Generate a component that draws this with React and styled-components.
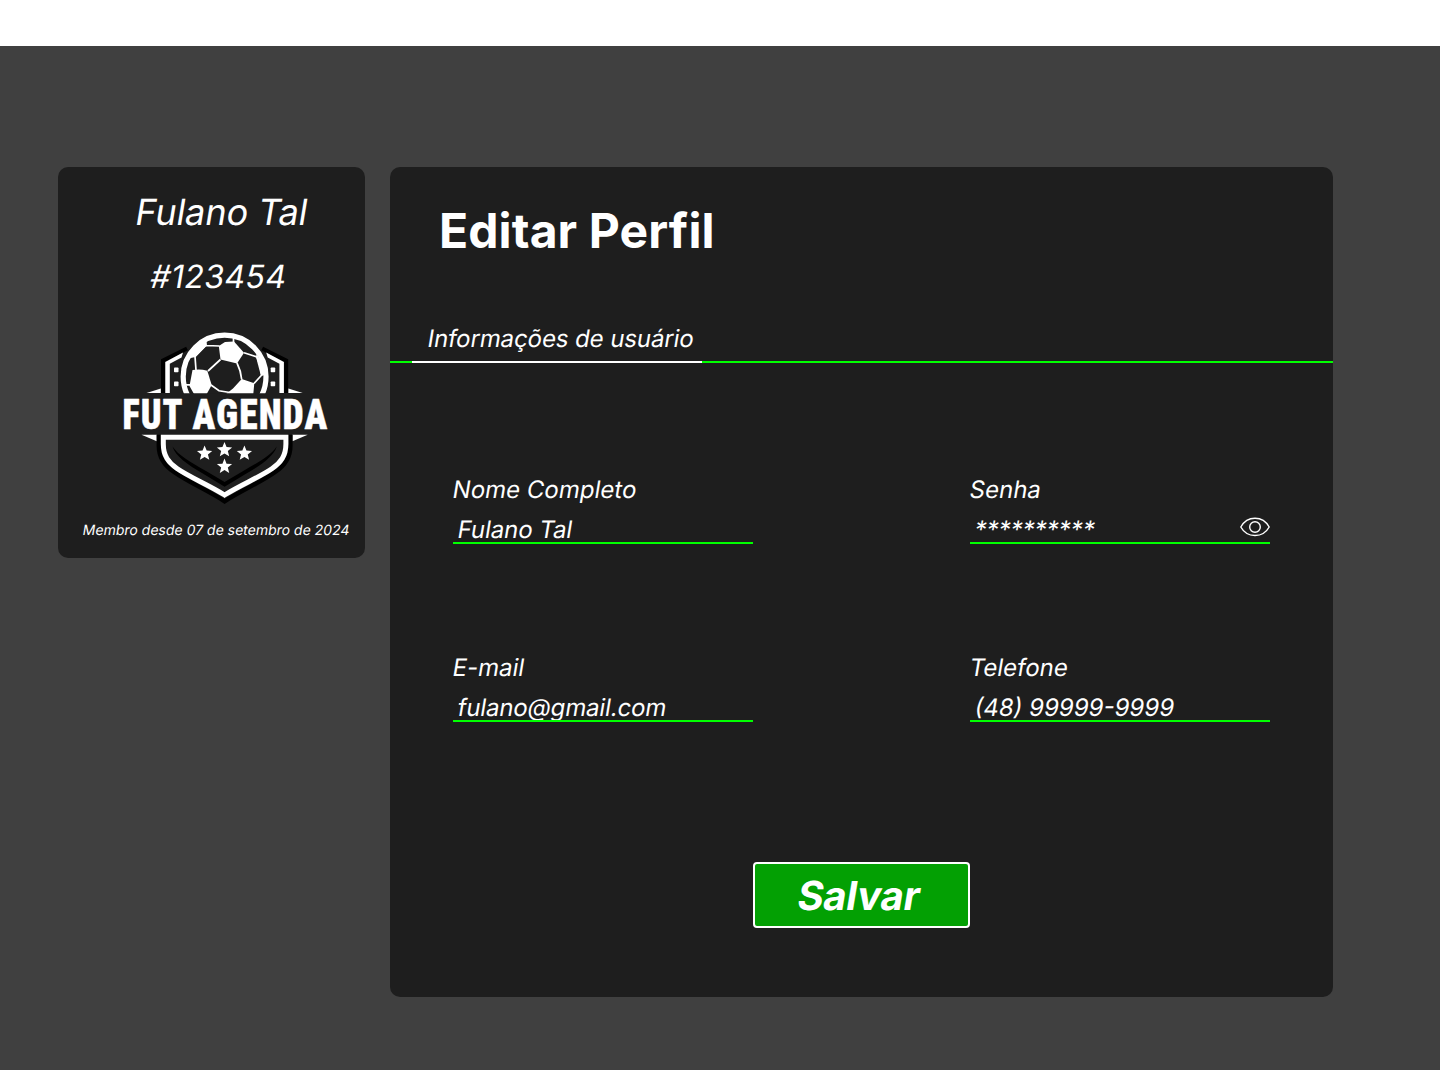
import React from "react";
import styled, { createGlobalStyle } from "styled-components";

const Global = createGlobalStyle`
  * { box-sizing: border-box; }
  body { margin: 0; background: #404040; font-family: Inter, "Liberation Sans", sans-serif; color: #fff; }
`;
const Page = styled.div`
  min-height: 1070px;
  background: #404040;
`;
const TopBar = styled.header`
  height: 46px;
  background: #fff;
`;
const Main = styled.main`
  display: flex;
  align-items: flex-start;
  gap: 25px;
  padding: 121px 107px 73px 58px;
`;
const ProfileCard = styled.aside`
  width: 307px;
  height: 391px;
  flex: none;
  display: flex;
  flex-direction: column;
  align-items: flex-start;
  background: #1e1e1e;
  border-radius: 10px;
`;
const Slanted = styled.span`
  display: inline-block;
  transform: skewX(-9.4deg);
  letter-spacing: ${(p) => p.$spacing || 0}px;
  white-space: nowrap;
`;
const CardText = styled(Slanted)`
  margin: ${(p) => p.$margin};
  font-size: ${(p) => p.$size}px;
  line-height: ${(p) => p.$line}px;
`;
const LogoArt = styled.svg`
  display: block;
  width: 214px;
  height: 180px;
  margin: 32px 0 0 60px;
  overflow: visible;
`;
const Panel = styled.section`
  width: 943px;
  height: 830px;
  display: flex;
  flex-direction: column;
  background: #1e1e1e;
  border-radius: 10px;
`;
const Title = styled.h1`
  margin: 35px 0 0 49px;
  font-size: 48px;
  line-height: 58px;
  font-weight: 700;
  letter-spacing: 0.1px;
`;
const Tabs = styled.nav`
  display: flex;
  height: 46px;
  margin-top: 57px;
  padding-left: 22px;
  box-shadow: inset 0 -2px #00ff00;
`;
const Tab = styled.span`
  width: 290px;
  padding: 7px 0 0 16.4px;
  border-bottom: 2px solid #fff;
  font-size: 24px;
  line-height: 29px;
`;
const Form = styled.form`
  display: flex;
  flex-direction: column;
  align-items: center;
  padding: 112px 63px 0;
`;
const Fields = styled.div`
  width: 100%;
  display: grid;
  grid-template-columns: 300px 300px;
  justify-content: space-between;
  row-gap: 109px;
`;
const Field = styled.label`
  height: 69px;
  display: flex;
  flex-direction: column;
  align-items: flex-start;
  font-size: 24px;
  line-height: 29px;
`;
const FieldName = styled(Slanted)`
  margin-left: 0.4px;
`;
const InputRow = styled.span`
  display: flex;
  align-items: flex-start;
  width: 100%;
  height: 29px;
  margin-top: 11px;
  border-bottom: 2px solid #00ff00;
`;
const Input = styled.input`
  flex: 1;
  min-width: 0;
  height: 27px;
  padding: 1px 0 0 5px;
  border: 0;
  outline: 0;
  background: transparent;
  color: #fff;
  font: inherit;
  letter-spacing: ${(p) => p.$spacing || 0}px;
  transform: skewX(-9.4deg);
`;
const Eye = styled.svg`
  width: 30px;
  height: 20px;
  margin-top: 2px;
  fill: none;
  stroke: #fff;
  stroke-width: 1.4;
`;
const SaveButton = styled.button`
  width: 217px;
  height: 66px;
  margin-top: 140px;
  padding: 2px 5px 0 0;
  border: 2px solid #fff;
  border-radius: 4px;
  background: #03a003;
  color: #fff;
  font: 700 40px/48px Inter, "Liberation Sans", sans-serif;
`;

const starPoints = (cx, cy) =>
  Array.from({ length: 10 }, (_, i) => {
    const r = i % 2 ? 3.5 : 8;
    const a = -Math.PI / 2 + (i * Math.PI) / 5;
    return `${cx + r * Math.cos(a)},${cy + r * Math.sin(a)}`;
  }).join(" ");

const Side = () => (
  <>
    <path d="M163 393V360.500L187 348.500" fill="none" stroke="#000" strokeWidth="4" />
    <path d="M165.300 393V362L183 352.500L181.500 357.500L169.800 363.800V393Z" fill="#fff" />
    <rect x="174" y="367.500" width="4.500" height="4.800" rx=".8" fill="#fff" />
    <rect x="174" y="381.500" width="4.500" height="4.800" rx=".8" fill="#fff" />
    <path d="M146.500 393L160.800 388.500V393Z" fill="#fff" />
    <path d="M141.500 434.700H156.800V441.200Z" fill="#fff" />
  </>
);

const Logo = () => (
  <LogoArt viewBox="118 328 214 180">
    <defs>
      <clipPath id="ballTop">
        <rect x="170" y="328" width="110" height="65.200" />
      </clipPath>
    </defs>
    <Side />
    <g transform="translate(449.2 0) scale(-1 1)"><Side /></g>
    <g clipPath="url(#ballTop)">
      <circle cx="224.600" cy="376.600" r="41.400" fill="#1e1e1e" stroke="#fff" strokeWidth="5.200" />
      <g fill="#fff">
        <path d="M192.500 370Q200 368.500 207.300 370.700L211.700 385L206.700 394H194L189.500 386Z" />
        <path d="M218.800 346L225 342L234 341.500L244 352.700L237 363.500L220.500 359.500Z" />
        <path d="M241.700 379L254.300 383.300L253.300 394H226L233 388.500Z" />
        <path d="M186 359L195.500 357L207 345.500L206.500 341L194 348Z" />
        <path d="M256.500 354L262 362L264.500 375L261 376L256 357Z" />
      </g>
      <path
        d="M220.500 359.500L208 371M211 385L219 390.800L230 392.500M237 363Q241 371 241.700 379.500M205.500 345.500L219.500 346M206 345L195 356.500L196 370M233.500 337V343M244 352.700L257 357Q260.500 365 261.700 375L254 383.500M184 384.800H190"
        fill="none" stroke="#fff" strokeWidth="1.700"
      />
    </g>
    <g fill="#fff" stroke="#fff" strokeWidth=".4" strokeLinejoin="round" fontFamily='"Roboto Condensed", Roboto, sans-serif' fontWeight="900" fontSize="42.600" letterSpacing="1.200">
      <text x="122.500" y="428.500" textLength="61" lengthAdjust="spacingAndGlyphs">FUT</text>
      <text x="192.600" y="428.500" textLength="135.600" lengthAdjust="spacingAndGlyphs">AGENDA</text>
    </g>
    <path d="M158.800 434.700V446C158.800 458 165 466 174 472C188 482 207 490 224.600 501.300C242.400 490 261.200 482 275.200 472C284.200 466 290.400 458 290.400 446V434.700" fill="none" stroke="#000" strokeWidth="4.400" />
    <path d="M163.300 437.300V444C163.300 456 168.500 462.500 177 468.500C190 477.500 208 484.500 224.600 495C241.200 484.500 259.200 477.500 272.200 468.500C280.700 462.500 285.900 456 285.900 444V437.300Z" fill="none" stroke="#fff" strokeWidth="5" />
    <path d="M172.500 446.500C178 455 190 462 206 471L224.600 482L243.200 471C259.200 462 271.200 455 276.700 446.500C274 456 262 464.500 246 473.800L224.600 486.800L203.200 473.800C187.200 464.500 175.200 456 172.500 446.500Z" fill="#000" />
    <g fill="#fff">
      <polygon points={starPoints(204.6, 453.4)} />
      <polygon points={starPoints(224.5, 449.9)} />
      <polygon points={starPoints(224.5, 466.5)} />
      <polygon points={starPoints(244.4, 453.4)} />
    </g>
  </LogoArt>
);

const FormField = ({ label, value, labelSpacing, valueSpacing, children }) => (
  <Field>
    <FieldName $spacing={labelSpacing}>{label}</FieldName>
    <InputRow>
      <Input defaultValue={value} $spacing={valueSpacing} />
      {children}
    </InputRow>
  </Field>
);

export default function App() {
  return (
    <Page>
      <Global />
      <TopBar />
      <Main>
        <ProfileCard>
          <CardText $size={36} $line={44} $margin="23px 0 0 77.6px" $spacing={-0.1}>Fulano Tal</CardText>
          <CardText $size={32} $line={39} $margin="23px 0 0 92.6px" $spacing={0.35}>#123454</CardText>
          <Logo />
          <CardText $size={14} $line={17} $margin="13px 0 0 25.4px">Membro desde 07 de setembro de 2024</CardText>
        </ProfileCard>
        <Panel>
          <Title>Editar Perfil</Title>
          <Tabs>
            <Tab><Slanted $spacing={-0.1}>Informações de usuário</Slanted></Tab>
          </Tabs>
          <Form onSubmit={(e) => e.preventDefault()}>
            <Fields>
              <FormField label="Nome Completo" value="Fulano Tal" valueSpacing={-0.05} />
              <FormField label="Senha" value="**********">
                <Eye viewBox="0 0 30 20">
                  <path d="M.8 10C4 4.200 9 1.200 15 1.200S26 4.200 29.200 10C26 15.800 21 18.500 15 18.500S4 15.800 .8 10Z" />
                  <circle cx="15" cy="10" r="5.300" />
                </Eye>
              </FormField>
              <FormField label="E-mail" value="fulano@gmail.com" valueSpacing={-0.14} />
              <FormField label="Telefone" value="(48) 99999-9999" />
            </Fields>
            <SaveButton type="submit"><Slanted $spacing={-0.3}>Salvar</Slanted></SaveButton>
          </Form>
        </Panel>
      </Main>
    </Page>
  );
}
